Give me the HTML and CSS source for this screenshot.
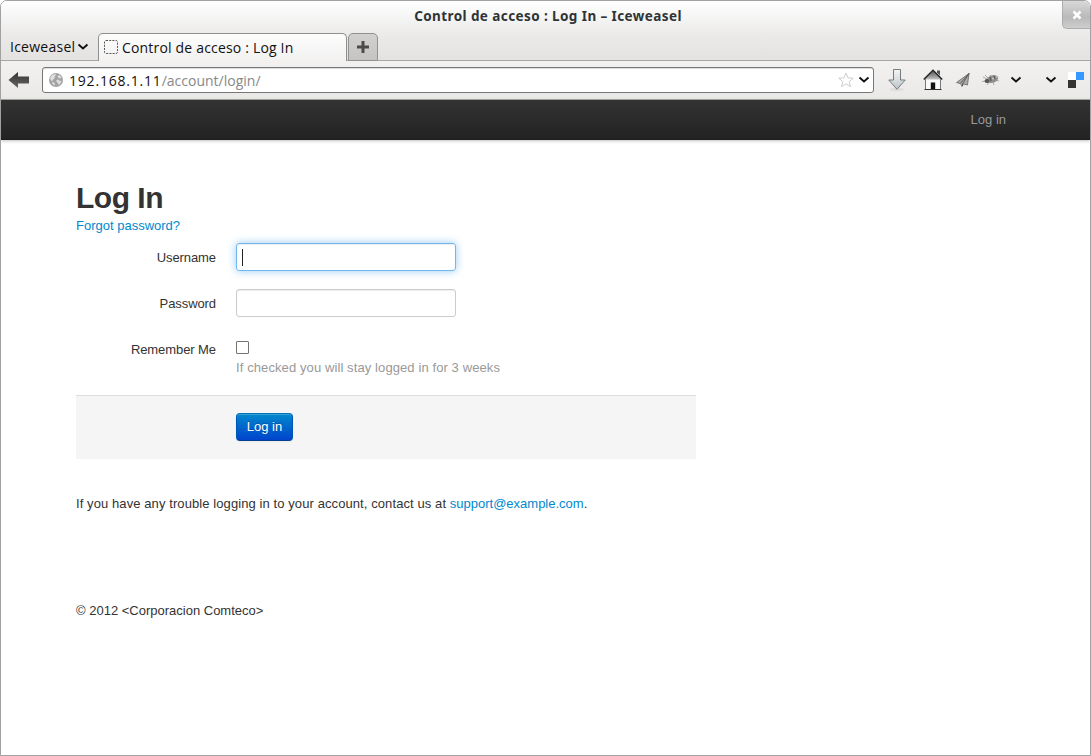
FILE: index.html
```html
<!DOCTYPE html>
<html lang="es">
<head>
<meta charset="utf-8">
<title>Control de acceso : Log In</title>
<link rel="stylesheet" href="styles.css">
</head>
<body>
<div class="window">
  <header class="chrome">
    <div class="titlebar">
      <span class="title">Control de acceso : Log In – Iceweasel</span>
      <button class="close" aria-label="Cerrar"><svg width="10" height="10" viewBox="0 0 10 10"><path d="M1.500 1.500l7 7M8.500 1.500l-7 7" stroke="#fff" stroke-width="2.600" fill="none"/></svg></button>
    </div>
    <div class="tabs">
      <div class="app-menu"><span class="app-name">Iceweasel</span><svg class="chev" width="12" height="8" viewBox="0 0 12 8"><path d="M1.500 1.500L6 5.500l4.500-4" stroke="#111" stroke-width="1.900" fill="none"/></svg></div>
      <div class="tab">
        <svg width="14" height="15" viewBox="0 0 14 15"><rect x=".5" y=".5" width="13" height="13" rx="1.500" fill="none" stroke="#555" stroke-dasharray="2 1.200"/></svg>
        <span class="tab-name">Control de acceso : Log In</span>
      </div>
      <div class="new-tab"><svg width="12" height="12" viewBox="0 0 12 12"><path d="M6 0v12M0 6h12" stroke="#4b4b4b" stroke-width="3"/></svg></div>
    </div>
    <div class="toolbar">
      <svg class="back" width="22" height="18" viewBox="0 0 22 18"><defs><linearGradient id="bk" x1="0" y1="0" x2="0" y2="1"><stop offset="0" stop-color="#333"/><stop offset="1" stop-color="#666"/></linearGradient></defs><path d="M.5 9L10 1v4.500h11v7H10V17z" fill="url(#bk)"/></svg>
      <div class="urlbar">
        <svg class="globe" width="14" height="14" viewBox="0 0 14 14"><circle cx="7" cy="7" r="7" fill="#a3a3a3"/><path d="M1 5l2-3 3-1 1 1-1.500 1.500L6 5 4.500 6l-1 2L2 7.500zM8.500 3l2-1 2 2.500-1.500 1L9.500 5zM7.500 7l2-.5 1 1.500 2-.5-1 3-2 1.500-.500-2-1.500-1zM3 9l2 .5 1 1.500-.5 1.500L3.500 11z" fill="#dedede"/></svg>
        <span class="url"><span class="host">192.168.1.11</span>/account/login/</span>
        <svg class="star" width="16" height="16" viewBox="0 0 16 16"><path d="M8 1l2 4.800 5.200.4-4 3.400 1.300 5L8 11.900 3.500 14.600l1.300-5-4-3.400L6 5.800z" fill="#fff" stroke="#ccc" stroke-linejoin="round"/></svg>
        <svg class="chev" width="12" height="8" viewBox="0 0 12 8"><path d="M1.500 1.500L6 5.500l4.500-4" stroke="#111" stroke-width="1.900" fill="none"/></svg>
      </div>
      <svg class="download" width="20" height="24" viewBox="0 0 20 24"><defs><linearGradient id="dl" x1="0" y1="0" x2="0" y2="1"><stop offset="0" stop-color="#f4f5f5"/><stop offset="1" stop-color="#bcc5c9"/></linearGradient></defs><ellipse cx="10" cy="21.500" rx="7" ry="1.800" fill="#dededd"/><path d="M6.500 1.500h7v10.500h4.700L10 21.300 1.800 12h4.700z" fill="url(#dl)" stroke="#757a7c" stroke-linejoin="round"/></svg>
      <svg class="home" width="20" height="22" viewBox="0 0 20 22"><defs><linearGradient id="rf" x1="0" y1="0" x2="0" y2="1"><stop offset="0" stop-color="#555"/><stop offset="1" stop-color="#c4c4c4"/></linearGradient></defs><path d="M2.500 10v10.500h15V10L10 3z" fill="#fafafa" stroke="#777"/><path d="M14 1.500h3v5l-3-3z" fill="#555"/><path d="M10 2L2 10.500h16z" fill="url(#rf)"/><path d="M.8 10.500L10 1.300l9.200 9.200" fill="none" stroke="#262626" stroke-width="1.600"/><path d="M7.800 13.500h4.400V20H7.800z" fill="#111"/><path d="M1.500 20.500h17" stroke="#333"/></svg>
      <svg class="plane" width="14" height="14" viewBox="0 0 14 14"><path d="M13 .5L.5 9.500 4 10.500zM13 .5L4.500 10.500 6 13.500 7.500 11l4 1z" fill="#aaa" stroke="#666" stroke-width=".8" stroke-linejoin="round"/><path d="M13 .5L6.500 11v2" fill="none" stroke="#444" stroke-width=".7"/></svg>
      <svg class="bug" width="18" height="14" viewBox="0 0 18 14"><path d="M1 4l4 2M0 8.500l4-.5M5 12l2-3M8 2l1 2M12 12l-1-3M17 8l-4-1M3 2l3 3" stroke="#aaa" fill="none"/><ellipse cx="10.500" cy="6" rx="5.800" ry="3.800" transform="rotate(-18 10.500 6)" fill="#8f8f8f"/><ellipse cx="5" cy="8" rx="2.500" ry="2" fill="#555"/><path d="M8 4l1 4M12 3l1 3" stroke="#5c5c5c" stroke-width="1.300"/><circle cx="11" cy="5.500" r="1" fill="#ccc"/><circle cx="14.500" cy="4" r="1" fill="#bbb"/></svg>
      <svg class="chev chev-a" width="12" height="8" viewBox="0 0 12 8"><path d="M1.500 1.500L6 5.500l4.500-4" stroke="#111" stroke-width="1.900" fill="none"/></svg>
      <svg class="chev chev-b" width="12" height="8" viewBox="0 0 12 8"><path d="M1.500 1.500L6 5.500l4.500-4" stroke="#111" stroke-width="1.900" fill="none"/></svg>
      <svg class="squares" width="16" height="16" viewBox="0 0 16 16"><path d="M0 0h8v8H0z" fill="#fff"/><path d="M8 0h8v8H8z" fill="#39f"/><path d="M0 8h8v8H0z" fill="#333"/></svg>
    </div>
  </header>
  <nav class="navbar"><a class="nav-link">Log in</a></nav>
  <main class="page">
    <h1>Log In</h1>
    <a class="link forgot">Forgot password?</a>
    <form class="form">
      <div class="row"><label>Username</label><div class="input focused"><span class="caret"></span></div></div>
      <div class="row"><label>Password</label><div class="input"></div></div>
      <div class="row"><label>Remember Me</label><div class="field"><span class="checkbox"></span><span class="help">If checked you will stay logged in for 3 weeks</span></div></div>
      <div class="actions"><button type="button" class="submit">Log in</button></div>
    </form>
    <p class="trouble"><span class="notice">If you have any trouble logging in to your account, contact us at </span><a class="link">support@example.com</a>.</p>
    <footer class="footer">© 2012 &lt;Corporacion Comteco&gt;</footer>
  </main>
</div>
</body>
</html>
```
FILE: styles.css
```css
* { box-sizing: border-box; }
body { margin: 0; background: #fff; }
svg { display: block; flex: none; }
button { padding: 0; font: inherit; }

.window {
  width: 1091px;
  height: 756px;
  border: 1px solid #a1a1a1;
  border-radius: 7px 7px 0 0;
  overflow: hidden;
  background: #fff;
}

.chrome {
  height: 99px;
  font: 14px/20px "Open Sans", "Noto Sans", sans-serif;
  color: #111;
  background: linear-gradient(#fff 0, #ebeae9 34px, #e3e2e0 60px);
}
.titlebar { display: flex; height: 32px; position: relative; justify-content: center; }
.title {
  font: bold 13.5px/20px "Noto Sans", sans-serif;
  letter-spacing: .41px;
  color: #2e3436;
  padding-top: 5px;
  margin-left: 5px;
  white-space: nowrap;
}
.close {
  position: absolute;
  right: 0;
  top: 0;
  width: 28px;
  height: 28px;
  display: flex;
  align-items: center;
  justify-content: center;
  border: solid #adadad;
  border-width: 0 0 1px 1px;
  border-radius: 0 0 0 5px;
  background: linear-gradient(#d9d9d9, #b9b9b9 60%, #cecece);
}

.tabs { display: flex; height: 28px; align-items: flex-end; box-shadow: inset 0 -1px #a6a6a5; }
.app-menu { display: flex; align-items: center; width: 97px; height: 28px; padding-left: 9px; }
.app-name { width: 67px; white-space: nowrap; letter-spacing: .25px; }
.tab {
  display: flex;
  align-items: center;
  gap: 4px;
  width: 249px;
  height: 28px;
  padding-left: 5px;
  border: solid #8f8f8e;
  border-width: 1px 1px 0;
  border-radius: 5px 5px 0 0;
  background: linear-gradient(#fdfdfd, #f2f1f0);
}
.tab-name { white-space: nowrap; letter-spacing: .18px; }
.new-tab {
  display: flex;
  align-items: center;
  justify-content: center;
  width: 30px;
  height: 28px;
  margin-left: 1px;
  border: 1px solid #929291;
  border-radius: 5px 5px 0 0;
  background: linear-gradient(#d2d1d0, #c5c4c3);
}

.toolbar {
  display: flex;
  align-items: center;
  height: 39px;
  padding-left: 7px;
  border-bottom: 1px solid #a6a6a5;
  background: linear-gradient(#f2f1f0, #eae9e8);
}
.urlbar {
  display: flex;
  align-items: center;
  width: 832px;
  height: 26px;
  margin: 0 0 1px 12px;
  padding: 0 3px 0 6px;
  border: 1px solid #777;
  border-radius: 3px;
  background: #fff;
  box-shadow: inset 0 1px #ddd;
}
.url { flex: 1; margin-left: 6px; color: #888; padding-top: 2px; }
.host { color: #111; letter-spacing: .8px; }
.star { margin-right: 4px; }
.download { margin-left: 13px; }
.home { margin-left: 16px; }
.plane { margin-left: 13px; }
.bug { margin-left: 12px; }
.chev-a { margin-left: 10px; }
.chev-b { margin-left: 23px; }
.squares { margin-left: 11px; }

.navbar {
  display: flex;
  align-items: center;
  justify-content: flex-end;
  height: 40px;
  padding-right: 84px;
  font: 13px/18px "Liberation Sans", Arial, sans-serif;
  color: #999;
  background: linear-gradient(#333, #222);
  box-shadow: 0 1px 3px rgba(0, 0, 0, .25), inset 0 -1px 0 rgba(0, 0, 0, .1);
}

.page {
  width: 695px;
  padding: 40px 0 0 75px;
  font: 13px/18px "Liberation Sans", Arial, sans-serif;
  color: #333;
}
h1 { margin: 0 0 1px; font-size: 30px; line-height: 36px; letter-spacing: -.5px; }
.link { color: #08c; }
.forgot { display: block; }
.form { padding-top: 8px; }
.row { display: flex; margin-bottom: 18px; }
.row label { width: 140px; margin-right: 20px; padding-top: 6px; text-align: right; letter-spacing: -.08px; }
.input {
  width: 220px;
  height: 28px;
  padding: 6px 5px;
  border: 1px solid #ccc;
  border-radius: 3px;
  box-shadow: inset 0 1px 1px rgba(0, 0, 0, .075);
}
.focused { border-color: #70b7ee; box-shadow: inset 0 1px 1px rgba(0, 0, 0, .075), 0 0 8px rgba(82, 168, 236, .6); }
.caret { display: block; width: 1px; height: 17px; margin-top: -1px; background: #222; }
.field { display: flex; flex-direction: column; padding-top: 5px; height: 42px; }
.checkbox { width: 13px; height: 13px; border: 1px solid #77736e; border-radius: 1px; margin-top: 1px; }
.help { margin-top: 5px; color: #999; letter-spacing: .1px; }
.actions { height: 64px; padding: 17px 0 0 160px; border-top: 1px solid #ddd; background: #f5f5f5; }
.submit {
  display: block;
  width: 57px;
  height: 28px;
  color: #fff;
  border: 1px solid #0055b3;
  border-color: #0074b8 #0055b3 #003f91;
  border-radius: 4px;
  background: linear-gradient(#08c, #04c);
  text-shadow: 0 -1px 0 rgba(0, 0, 0, .25);
  box-shadow: inset 0 1px 0 rgba(255, 255, 255, .2), 0 1px 2px rgba(0, 0, 0, .05);
}
.trouble { margin: 36px 0 89px; white-space: nowrap; }
.notice { letter-spacing: .09px; }
```
